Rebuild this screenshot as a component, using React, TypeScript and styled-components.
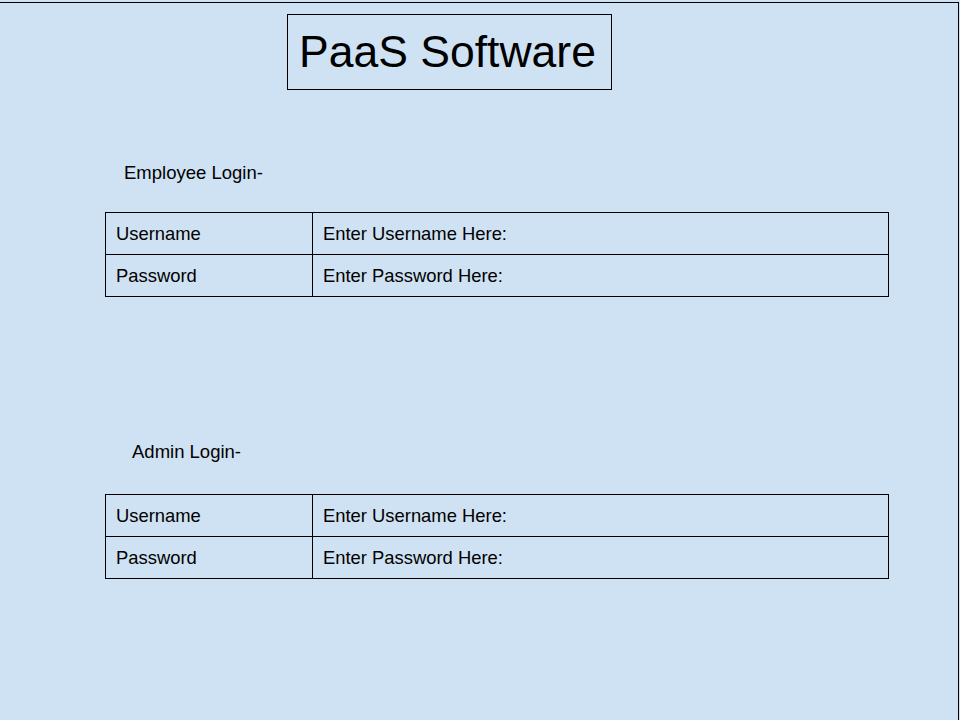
import styled, { createGlobalStyle } from 'styled-components'

const GlobalStyle = createGlobalStyle`
  * {
    margin: 0;
    padding: 0;
    box-sizing: border-box;
  }
  html, body {
    background: #cfe2f3;
  }
  body {
    font-family: "Liberation Sans", Arial, sans-serif;
    color: #000;
  }
`

const Frame = styled.div`
  margin-top: 2px;
  width: 959px;
  height: 718px;
  border-top: 1px solid #000;
  border-right: 1px solid #000;
  background: #cfe2f3;
`

const TitleBox = styled.div`
  margin: 11px 0 0 287px;
  width: 325px;
  height: 76px;
  border: 1px solid #000;
  display: flex;
  align-items: center;
  justify-content: center;
  font-size: 44.5px;
  line-height: 1;
  padding-right: 4px;
`

const Section = styled.section<{ $top: number }>`
  margin-top: ${p => p.$top}px;
  padding-left: 105px;
`

const Label = styled.div<{ $indent: number; $gap: number }>`
  margin-left: ${p => p.$indent}px;
  margin-bottom: ${p => p.$gap}px;
  font-size: 18.5px;
  line-height: 20px;
`

const Grid = styled.div`
  width: 784px;
  display: grid;
  grid-template-columns: 207px 1fr;
  grid-auto-rows: 42px;
  border-top: 1px solid #000;
  border-left: 1px solid #000;
`

const Cell = styled.div`
  border-right: 1px solid #000;
  border-bottom: 1px solid #000;
  display: flex;
  align-items: center;
  padding: 1px 0 0 10px;
  font-size: 18.4px;
`

const LoginTable = () => (
  <Grid>
    <Cell>Username</Cell>
    <Cell>Enter Username Here:</Cell>
    <Cell>Password</Cell>
    <Cell>Enter Password Here:</Cell>
  </Grid>
)

const App = () => {
  return (
    <>
      <GlobalStyle />
      <Frame>
        <TitleBox>PaaS Software</TitleBox>
        <Section $top={73}>
          <Label $indent={19} $gap={29}>Employee Login-</Label>
          <LoginTable />
        </Section>
        <Section $top={145}>
          <Label $indent={27} $gap={32}>Admin Login-</Label>
          <LoginTable />
        </Section>
      </Frame>
    </>
  )
}

export default App
